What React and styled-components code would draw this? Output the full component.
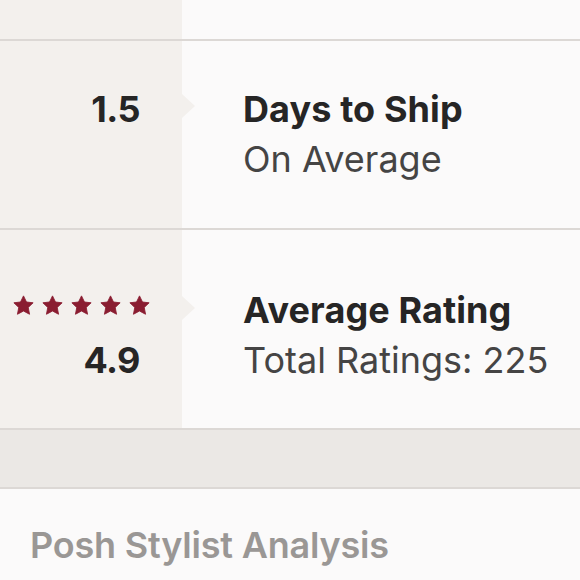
import React from "react";
import styled, { createGlobalStyle } from "styled-components";

const GlobalStyle = createGlobalStyle`
  html, body {
    margin: 0;
    padding: 0;
    background: #fbfafa;
  }
  body {
    font-family: Inter, "Open Sans", sans-serif;
    -webkit-font-smoothing: antialiased;
  }
`;

const Page = styled.div`
  width: 580px;
  height: 580px;
  overflow: hidden;
  background: #fbfafa;
`;

const Row = styled.div`
  display: grid;
  grid-template-columns: 182px 1fr;
  height: ${(p) => p.height}px;
  border-bottom: 2px solid #dcd8d5;
`;

const Side = styled.div`
  position: relative;
  background: #f3f0ed;
  display: flex;
  flex-direction: column;
  align-items: flex-end;
  padding: ${(p) => p.top || 0}px 42px 0 0;

  ${(p) =>
    p.arrow &&
    `
    &::after {
      content: "";
      position: absolute;
      left: 100%;
      top: ${p.arrow - 12}px;
      border-top: 12px solid transparent;
      border-bottom: 12px solid transparent;
      border-left: 13px solid #f3f0ed;
    }
  `}
`;

const Main = styled.div`
  padding: ${(p) => p.top || 0}px 0 0 61px;
  display: flex;
  flex-direction: column;
`;

const Number = styled.div`
  font-size: 36px;
  font-weight: 700;
  color: #262525;
  line-height: 50px;
  letter-spacing: -0.5px;
  margin-top: ${(p) => p.shift || 0}px;
`;

const Title = styled.div`
  font-size: 36px;
  font-weight: 700;
  color: #262525;
  line-height: 50px;
  letter-spacing: 0.1px;
`;

const Sub = styled.div`
  font-size: 36px;
  font-weight: 400;
  color: #454444;
  line-height: 50px;
`;

const Stars = styled.div`
  display: flex;
  gap: 8px;
  height: 50px;
  align-items: center;
  margin-right: -10px;

  svg {
    display: block;
    flex-shrink: 0;
  }
`;

const Band = styled.div`
  height: 57px;
  background: #ebe8e5;
  border-bottom: 2px solid #dcd8d5;
`;

const Heading = styled.h2`
  margin: 0;
  padding: 34px 0 0 30px;
  font-size: 36px;
  font-weight: 600;
  color: #9a9795;
  line-height: 44px;
  letter-spacing: -0.2px;
`;

const Star = () => (
  <svg width="21" height="21" viewBox="0 0 24 24">
    <path
      d="M12 1l3.4 7 7.6.9-5.6 5.3 1.5 7.8L12 18.3 5.1 22l1.5-7.8L1 8.9l7.6-.9z"
      fill="#8a1d31"
      stroke="#8a1d31"
      strokeWidth="1"
      strokeLinejoin="round"
    />
  </svg>
);

export default function App() {
  return (
    <Page>
      <GlobalStyle />
      <Row height={39}>
        <Side />
        <Main />
      </Row>
      <Row height={187}>
        <Side top={43} arrow={65}>
          <Number>1.5</Number>
        </Side>
        <Main top={43}>
          <Title>Days to Ship</Title>
          <Sub>On Average</Sub>
        </Main>
      </Row>
      <Row height={198}>
        <Side top={50} arrow={78}>
          <Stars>
            {[0, 1, 2, 3, 4].map((i) => (
              <Star key={i} />
            ))}
          </Stars>
          <Number shift={5}>4.9</Number>
        </Side>
        <Main top={55}>
          <Title>Average Rating</Title>
          <Sub>Total Ratings: 225</Sub>
        </Main>
      </Row>
      <Band />
      <Heading>Posh Stylist Analysis</Heading>
    </Page>
  );
}
